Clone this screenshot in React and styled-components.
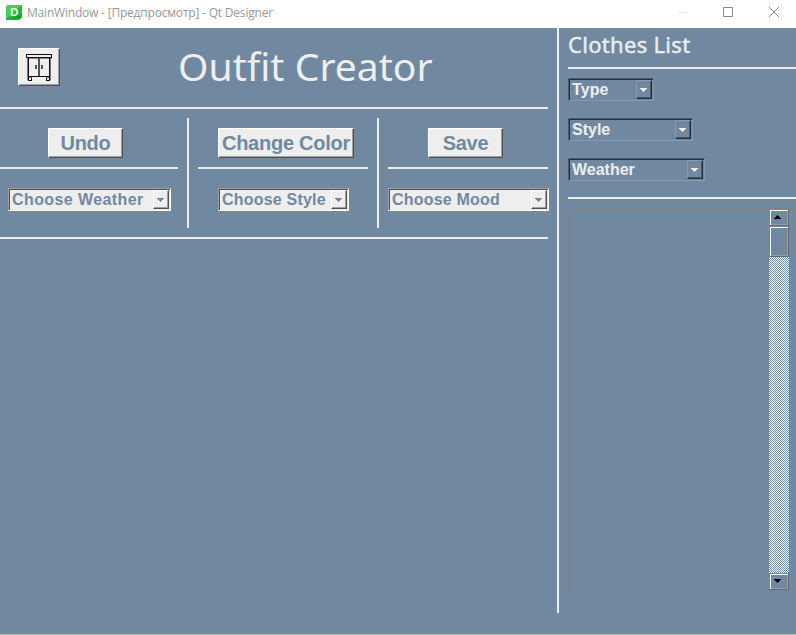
import React from "react";
import styled, { createGlobalStyle, css } from "styled-components";

const BLUE = "#7189a0";
const LIGHT = "#eeeeee";

const Global = createGlobalStyle`
  * { box-sizing: border-box; }
  html, body { margin: 0; padding: 0; overflow: hidden; }
  button { font: inherit; margin: 0; }
`;

const Window = styled.div`
  width: 796px;
  height: 635px;
  display: flex;
  flex-direction: column;
  background: ${BLUE};
  font-family: "Liberation Sans", Arial, sans-serif;
`;

const TitleBar = styled.header`
  height: 28px;
  flex: none;
  display: flex;
  align-items: flex-start;
  background: #fff;
  padding-left: 6px;
`;

const AppIcon = styled.svg`
  width: 16px;
  height: 16px;
  margin-top: 4px;
  flex: none;
`;

const Caption = styled.span`
  flex: 1;
  margin-left: 5px;
  font: 12px/26px "Open Sans", "Noto Sans", sans-serif;
  letter-spacing: -0.2px;
  color: #999;
  white-space: nowrap;
`;

const WindowButtons = styled.svg`
  width: 136px;
  height: 28px;
  flex: none;
`;

const Content = styled.div`
  flex: 1;
  min-height: 0;
  display: grid;
  grid-template-columns: 557px 2px 1fr;
`;

const BottomEdge = styled.div`
  height: 2px;
  flex: none;
  background: #b4b4b4;
  border-top: 1px solid #808488;
`;

const Rule = styled.div`
  height: 2px;
  flex: none;
  background: ${LIGHT};
`;

const VerticalRule = styled.div`
  width: 2px;
  height: ${(p) => p.$height}px;
  background: ${LIGHT};
`;

const Workspace = styled.main`
  width: 548px;
`;

const Banner = styled.div`
  height: 79px;
  display: flex;
  align-items: flex-start;
  padding: 20px 0 0 18px;
`;

const Title = styled.h1`
  margin: -9px 0 0 118px;
  font: 400 39px/54px "Noto Sans", "Open Sans", sans-serif;
  letter-spacing: 0.05px;
  color: ${LIGHT};
  white-space: nowrap;
`;

const raised = css`
  background: ${LIGHT};
  border: 1px solid;
  border-color: #fff #505050 #505050 #fff;
  box-shadow: inset -1px -1px #a0a0a0;
`;

const PushButton = styled.button`
  ${raised}
  width: ${(p) => p.$width}px;
  height: ${(p) => p.$height || 30}px;
  padding: 0;
  display: flex;
  align-items: center;
  justify-content: center;
  font: bold 20px/28px "Liberation Sans", Arial, sans-serif;
  letter-spacing: -0.25px;
  color: ${BLUE};
  white-space: nowrap;
`;

const Tools = styled.div`
  height: 128px;
  display: grid;
  grid-template-columns: 178px 2px 170px 2px 160px;
  column-gap: 9px;
  padding-top: 9px;
  align-items: start;
`;

const ToolColumn = styled.section`
  display: flex;
  flex-direction: column;
  padding-top: 10px;
  margin-right: -2px;
`;

const ButtonSlot = styled.div`
  height: 39px;
  padding-left: ${(p) => p.$left}px;
`;

const ToolRule = styled(Rule)`
  width: ${(p) => p.$width}px;
`;

const ComboSlot = styled.div`
  padding: 19px 0 0 ${(p) => p.$left}px;
`;

const Combo = styled.div`
  width: ${(p) => p.$width}px;
  height: 23px;
  flex: none;
  display: flex;
  justify-content: space-between;
  padding: 1px 1px 1px 3px;
  background: ${(p) => (p.$dark ? BLUE : LIGHT)};
  color: ${(p) => (p.$dark ? LIGHT : BLUE)};
  border: 1px solid;
  border-color: ${(p) => (p.$dark ? "#4b5b6b #7f9bb8 #7f9bb8 #4b5b6b" : "#9f9f9f #fff #fff #9f9f9f")};
  box-shadow: inset 1px 1px ${(p) => (p.$dark ? "#262e36" : "#4f4f4f")};
  font: bold 16px/19px "Liberation Sans", Arial, sans-serif;
  letter-spacing: ${(p) => p.$spacing || 0}px;
  white-space: nowrap;
`;

const DropButton = styled.span`
  width: 16px;
  height: 19px;
  display: flex;
  align-items: flex-start;
  justify-content: center;
  padding: 7px 1px 0 0;
  border: 1px solid;
  border-color: ${(p) => (p.$dark ? "#7f9bb8 #262e36 #262e36 #7f9bb8" : "#fff #4f4f4f #4f4f4f #fff")};
  box-shadow: inset -1px -1px ${(p) => (p.$dark ? "#4b5b6b" : "#9f9f9f")};
`;

const Arrow = styled.svg`
  width: 7px;
  height: 4px;
  display: block;
  fill: currentColor;
  shape-rendering: crispEdges;
`;

const Sidebar = styled.aside`
  padding-left: 9px;
  display: flex;
  flex-direction: column;
  min-width: 0;
`;

const SideTitle = styled.h2`
  height: 39px;
  flex: none;
  margin: 0;
  font: 400 22px/33px "Noto Sans", "Open Sans", sans-serif;
  letter-spacing: 0.3px;
  color: ${LIGHT};
  -webkit-text-stroke: 0.4px ${LIGHT};
`;

const Filters = styled.div`
  height: 128px;
  flex: none;
  display: flex;
  flex-direction: column;
  gap: 17px;
  padding-top: 9px;
`;

const ListArea = styled.div`
  height: 392px;
  flex: none;
  margin-top: 9px;
  display: flex;
  justify-content: flex-end;
  padding-right: 7px;
  border: 1px solid #828282;
  border-right: 0;
`;

const ScrollBar = styled.div`
  width: 20px;
  height: 381px;
  display: flex;
  flex-direction: column;
`;

const ScrollPart = styled.div`
  height: ${(p) => p.$height}px;
  flex: none;
  display: flex;
  justify-content: center;
  padding: 5px 3px 0 0;
  color: #000;
  border: 1px solid;
  border-color: ${BLUE} #686868 #686868 ${BLUE};
  box-shadow: inset 1px 1px #fff, inset -1px -1px #9a9c9e;
`;

const Track = styled.div`
  flex: 1;
  background: repeating-conic-gradient(#fff 0 25%, ${BLUE} 0 50%) 0 0 / 2px 2px;
`;

function DownArrow() {
  return (
    <Arrow viewBox="0 0 7 4">
      <path d="M0 0h7v1H0zM1 1h5v1H1zM2 2h3v1H2zM3 3h1v1H3z" />
    </Arrow>
  );
}

function ComboBox({ label, ...rest }) {
  return (
    <Combo {...rest}>
      <span>{label}</span>
      <DropButton $dark={rest.$dark}>
        <DownArrow />
      </DropButton>
    </Combo>
  );
}

function Wardrobe() {
  return (
    <svg width="28" height="30" viewBox="0 0 28 30" fill="none" stroke="#111" shapeRendering="crispEdges">
      <path d="M2 6.5h25" stroke="#888" />
      <path d="M1.5 2.5h25v3h-25z" />
      <path d="M3.5 6v18M24.5 6v18M3 24.5h22M3.5 24v4h3v-4M21.5 24v4h3v-4" />
      <path d="M2.5 6v22M25.5 6v22M4 25.5h3M21 25.5h3" stroke="#777" />
      <path d="M14 6v18" stroke="#555" strokeWidth="2" />
      <path d="M11 13v4M17 13v4" stroke="#555" strokeWidth="2" />
    </svg>
  );
}

export default function App() {
  return (
    <Window>
      <Global />
      <TitleBar>
        <AppIcon viewBox="0 0 16 16">
          <path d="M2 1h14v12l-3 3H0V3z" fill="#21b83d" />
          <path d="M2 1h14L0 15V3z" fill="#43cf58" />
          <path d="M16 10v3l-2 2H4z" fill="#159c2c" />
          <text x="8.2" y="12" textAnchor="middle" fontFamily="Liberation Sans" fontWeight="700" fontSize="11" fill="#fff">D</text>
        </AppIcon>
        <Caption>MainWindow - [Предпросмотр] - Qt Designer</Caption>
        <WindowButtons viewBox="0 0 136 28" fill="none" stroke="#8c8c8c">
          <path d="M18 12.5h10" stroke="#e4e4e4" />
          <path d="M63.5 7.5h9v9h-9z" />
          <path d="M109 7l10 10M119 7l-10 10" />
        </WindowButtons>
      </TitleBar>
      <Content>
        <Workspace>
          <Banner>
            <PushButton $width={42} $height={38} aria-label="Wardrobe">
              <Wardrobe />
            </PushButton>
            <Title>Outfit Creator</Title>
          </Banner>
          <Rule />
          <Tools>
            <ToolColumn>
              <ButtonSlot $left={48}><PushButton $width={75}>Undo</PushButton></ButtonSlot>
              <ToolRule $width={178} />
              <ComboSlot $left={8}><ComboBox $width={163} $spacing={0.4} label="Choose Weather" /></ComboSlot>
            </ToolColumn>
            <VerticalRule $height={110} />
            <ToolColumn>
              <ButtonSlot $left={20}><PushButton $width={136}>Change Color</PushButton></ButtonSlot>
              <ToolRule $width={170} />
              <ComboSlot $left={20}><ComboBox $width={131} $spacing={0.2} label="Choose Style" /></ComboSlot>
            </ToolColumn>
            <VerticalRule $height={110} />
            <ToolColumn>
              <ButtonSlot $left={40}><PushButton $width={75}>Save</PushButton></ButtonSlot>
              <ToolRule $width={160} />
              <ComboSlot $left={0}><ComboBox $width={161} $spacing={0.2} label="Choose Mood" /></ComboSlot>
            </ToolColumn>
          </Tools>
          <Rule />
        </Workspace>
        <VerticalRule $height={585} />
        <Sidebar>
          <SideTitle>Clothes List</SideTitle>
          <Rule />
          <Filters>
            <ComboBox $dark $width={86} $spacing={0.1} label="Type" />
            <ComboBox $dark $width={125} label="Style" />
            <ComboBox $dark $width={137} label="Weather" />
          </Filters>
          <Rule />
          <ListArea>
            <ScrollBar>
              <ScrollPart $height={17}>
                <Arrow viewBox="0 0 7 4">
                  <path d="M3 0h1v1H3zM2 1h3v1H2zM1 2h5v1H1zM0 3h7v1H0z" />
                </Arrow>
              </ScrollPart>
              <ScrollPart $height={31} />
              <Track />
              <ScrollPart $height={17}><DownArrow /></ScrollPart>
            </ScrollBar>
          </ListArea>
        </Sidebar>
      </Content>
      <BottomEdge />
    </Window>
  );
}
